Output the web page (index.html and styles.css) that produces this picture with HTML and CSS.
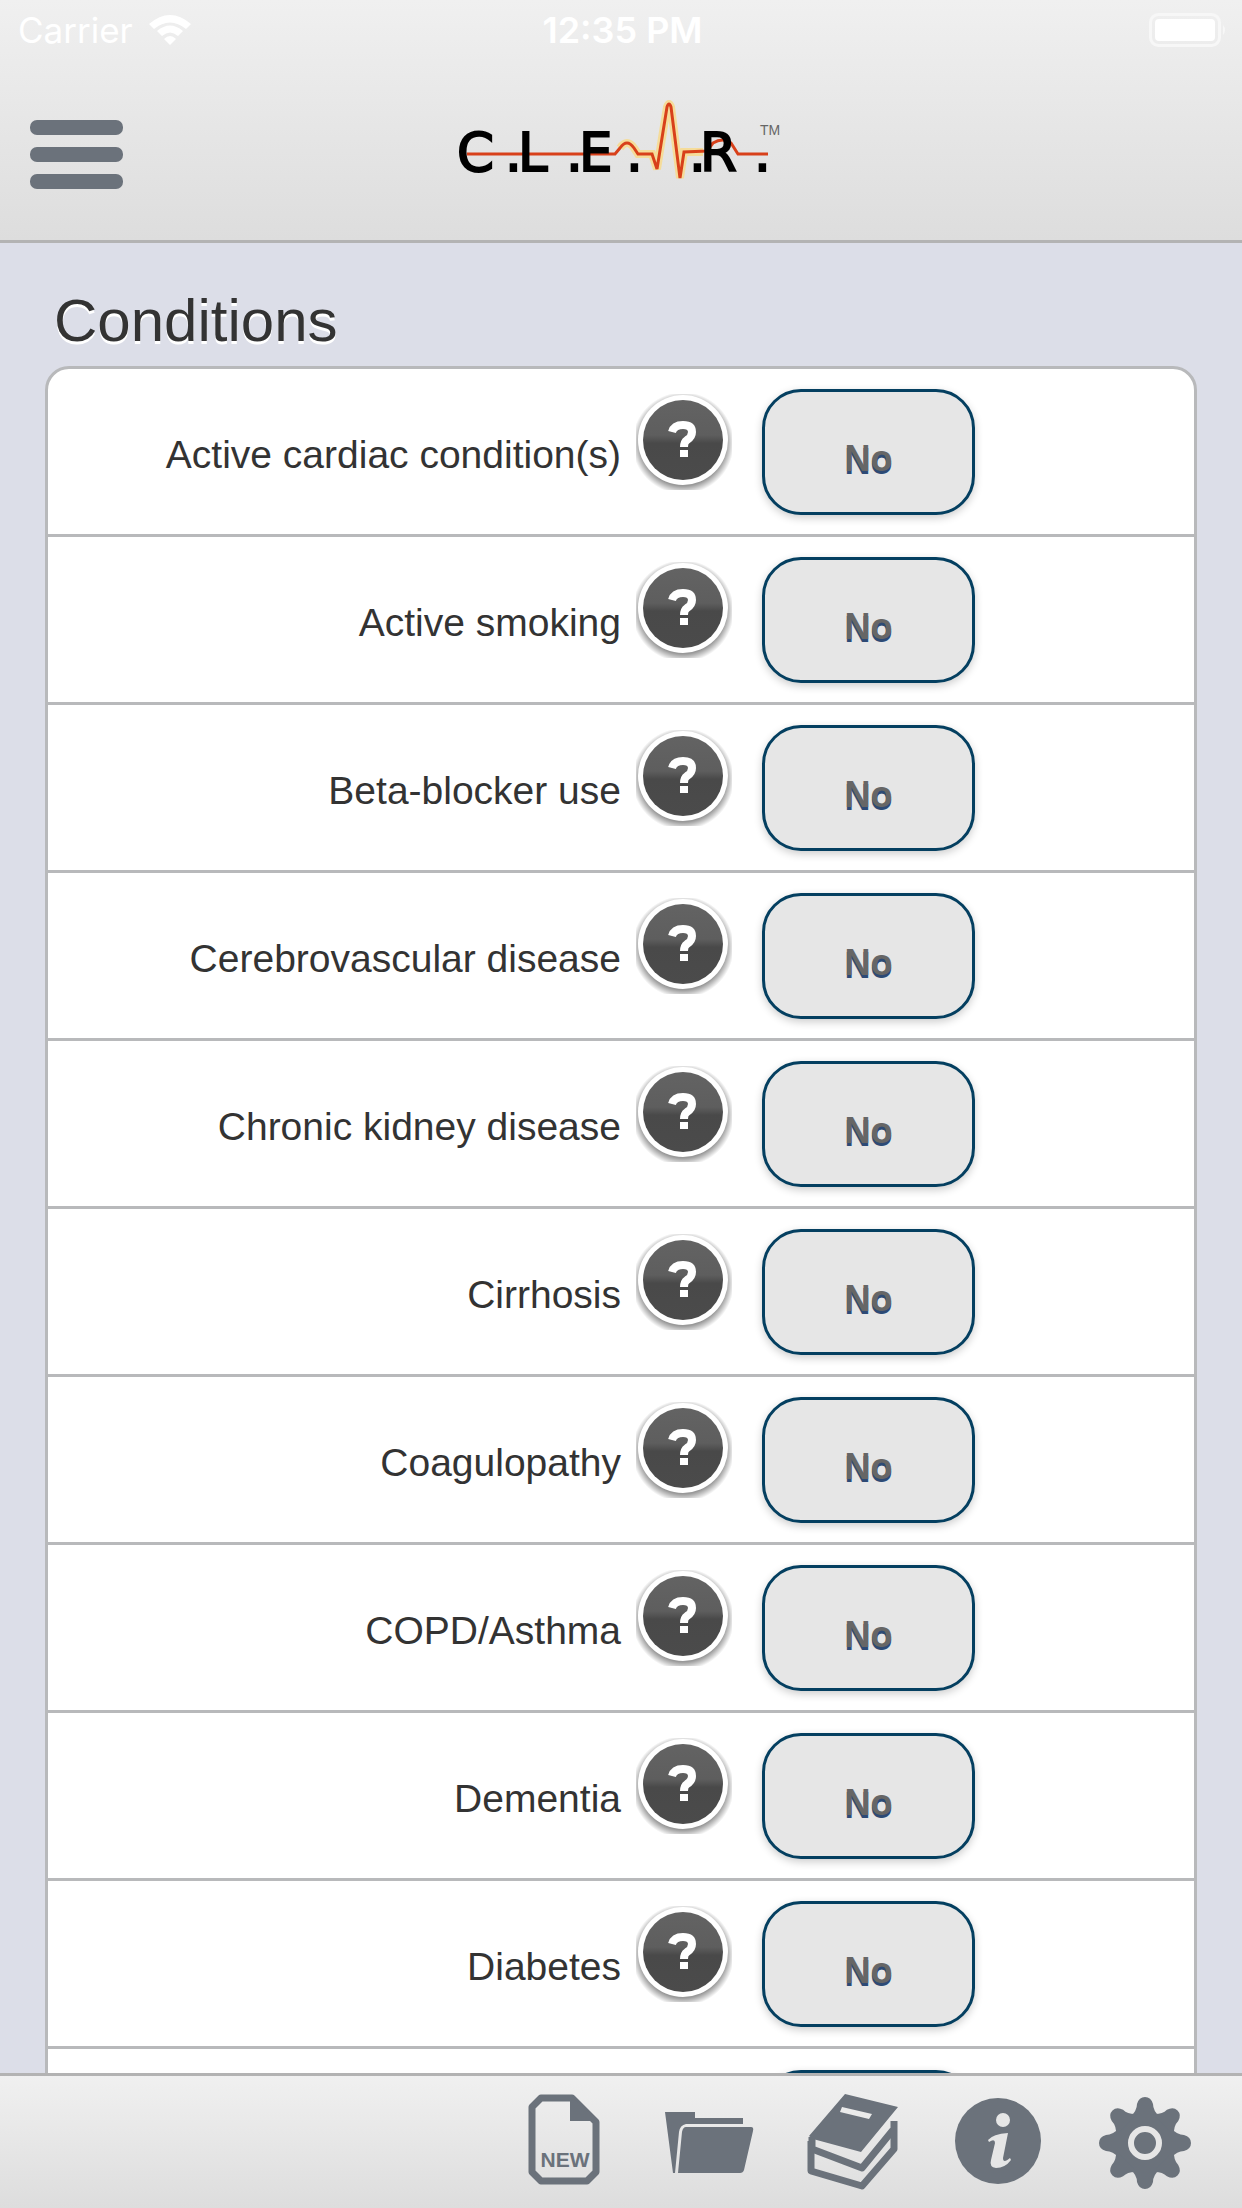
FILE: index.html
```html
<!DOCTYPE html>
<html lang="en">
<head>
    <meta charset="UTF-8">
    <meta name="viewport" content="width=device-width, initial-scale=1.0">
    <title>C.L.E.A.R. - Conditions</title>
    <link rel="stylesheet" href="styles.css">
</head>
<body>
    <!-- Shared shapes: the help icon of every row and one gear tooth -->
    <svg class="sprite" aria-hidden="true">
        <defs>
            <linearGradient id="help-fill" x1="0" y1="0" x2="0" y2="1">
                <stop offset="0" stop-color="#636363"/>
                <stop offset="0.44" stop-color="#5e5e5e"/>
                <stop offset="0.54" stop-color="#494949"/>
                <stop offset="1" stop-color="#4b4b4b"/>
            </linearGradient>
            <radialGradient id="help-shadow">
                <stop offset="0.84" stop-color="#000" stop-opacity="0.4"/>
                <stop offset="1" stop-color="#000" stop-opacity="0"/>
            </radialGradient>
            <path id="tooth" d="M-15 -26 Q-8 -32 -8 -39 Q-6 -46 0 -46 Q6 -46 8 -39 Q8 -32 15 -26 Z"/>
        </defs>
        <symbol id="help" viewBox="0 0 96 96">
            <circle cx="47" cy="49" r="51" fill="url(#help-shadow)"/>
            <circle cx="47" cy="46" r="45" fill="#fff"/>
            <circle cx="47" cy="46" r="40" fill="url(#help-fill)"/>
            <path d="M36 38 Q38 31 47 31 Q56 31 56 38 Q56 43 51 46 Q48 48 48 53" fill="none" stroke="#fff" stroke-width="8"/>
            <rect x="44" y="56" width="8" height="7" fill="#fff"/>
        </symbol>
    </svg>

    <header class="header">
        <div class="status-bar">
            <div class="carrier">
                <span>Carrier</span>
                <svg class="wifi" viewBox="0 0 42 30" aria-hidden="true">
                    <path d="M0 9 Q21 -9 42 9 L37 14 Q21 1 5 14 Z"/>
                    <path d="M8 16 Q21 5 34 16 L29 21 Q21 14 13 21 Z"/>
                    <path d="M15 24 Q21 18 27 24 L21 30 Z"/>
                </svg>
            </div>
            <span class="time">12:35 PM</span>
            <svg class="battery" viewBox="0 0 78 34" aria-hidden="true">
                <rect x="1.5" y="1.5" width="69" height="31" rx="8" fill="none" stroke="#f7f7f7" stroke-width="3"/>
                <rect x="6" y="6" width="60" height="22" rx="4" fill="#fff"/>
                <path d="M74 12 Q78 17 74 22 Z" fill="#f7f7f7"/>
            </svg>
        </div>
        <div class="title-bar">
            <button class="menu-button" type="button" aria-label="Menu">
                <span></span>
                <span></span>
                <span></span>
            </button>
            <svg class="logo" viewBox="0 0 340 96" role="img" aria-label="C.L.E.A.R.">
                <path class="pulse-glow" d="M169 58 Q176 48 183 58 L187 64 H201 L206 79 L216 17 Q218 11 220 17 L229 88 L233 62 H252"/>
                <path class="pulse" d="M16 64 H164 L169 58 Q176 48 183 58 L187 64 H201 L206 79 L216 17 Q218 11 220 17 L229 88 L233 62 L256 61 L262 53 Q272 47 280 53 L287 64 H317"/>
                <text class="logo-text" x="6 54 67 115 128 175 238 249 303" y="81">C.L.E..R.</text>
                <text class="logo-tm" x="309" y="45">TM</text>
            </svg>
        </div>
    </header>

    <main class="content">
        <h1>Conditions</h1>
        <div class="list" id="conditions"></div>
    </main>

    <footer class="toolbar">
        <button type="button" aria-label="New">
            <svg viewBox="0 0 96 96">
                <path class="outline" d="M23 7 H54 L78 31 V81 L69 90 H23 L14 81 V16 Z"/>
                <path d="M52 4 L81 30 H52 Z"/>
                <text class="new-text" x="47" y="76" text-anchor="middle">NEW</text>
            </svg>
        </button>
        <button type="button" aria-label="Open">
            <svg viewBox="0 0 96 96">
                <path d="M2 21 H32 V27 H80 V33 H23 Q17 34 16 41 L12 82 H10 Z"/>
                <path d="M23 36 H88 Q91 36 90 40 L81 79 Q80 82 77 82 H15 L19 41 Q20 36 23 36 Z"/>
            </svg>
        </button>
        <button type="button" aria-label="Library">
            <svg viewBox="0 0 96 96">
                <path fill-rule="evenodd" d="M37 3 L90 16 L53 61 L5 48 L1 45 Z M34 16 L64 23 L61 28 L32 21 Z"/>
                <path class="outline" d="M4 46 V58 L54 77 L85 39"/>
                <path class="outline" d="M3 50 V80 L54 95 L86 58 V30"/>
            </svg>
        </button>
        <button type="button" aria-label="Information">
            <svg viewBox="0 0 96 96">
                <circle cx="45" cy="50" r="43"/>
                <circle cx="50" cy="29" r="7" fill="#e6e6e6"/>
                <path d="M35 49 Q40 43 55 42 L50 67 Q50 73 57 67 L58 69 Q52 77 43 77 Q36 76 38 69 L42 52 Q42 47 36 51 Z" fill="#e6e6e6"/>
            </svg>
        </button>
        <button type="button" aria-label="Settings">
            <svg viewBox="0 0 96 96">
                <g transform="translate(47 52)">
                    <circle r="30"/>
                    <use href="#tooth"/>
                    <use href="#tooth" transform="rotate(45)"/>
                    <use href="#tooth" transform="rotate(90)"/>
                    <use href="#tooth" transform="rotate(135)"/>
                    <use href="#tooth" transform="rotate(180)"/>
                    <use href="#tooth" transform="rotate(225)"/>
                    <use href="#tooth" transform="rotate(270)"/>
                    <use href="#tooth" transform="rotate(315)"/>
                    <circle r="14" fill="none" stroke="#e6e6e6" stroke-width="6"/>
                </g>
            </svg>
        </button>
    </footer>

    <script>
        const conditions = [
            'Active cardiac condition(s)',
            'Active smoking',
            'Beta-blocker use',
            'Cerebrovascular disease',
            'Chronic kidney disease',
            'Cirrhosis',
            'Coagulopathy',
            'COPD/Asthma',
            'Dementia',
            'Diabetes',
            ''
        ];
        const list = document.getElementById('conditions');

        conditions.forEach(function(name, i) {
            list.innerHTML += `
                <div class="row">
                    <label for="condition_${i}">${name}</label>
                    <div class="controls">
                        <button class="help-button" type="button" aria-label="Help">
                            <svg viewBox="0 0 96 96"><use href="#help"/></svg>
                        </button>
                        <button class="answer" id="condition_${i}" type="button">${name ? 'No' : ''}</button>
                    </div>
                </div>
            `;
        });

        // Toggle the answer between No and Yes
        list.addEventListener('click', function(event) {
            if (event.target.classList.contains('answer')) {
                event.target.textContent = event.target.textContent === 'No' ? 'Yes' : 'No';
            }
        });
    </script>
</body>
</html>
```
FILE: styles.css
```css
* {
    box-sizing: border-box;
}
body {
    margin: 0;
    height: 100vh;
    display: flex;
    flex-direction: column;
    font-family: "Liberation Sans", Arial, sans-serif;
    background: #dcdee8;
    color: #333;
}
button {
    padding: 0;
    border: none;
    background: none;
    font-family: inherit;
    cursor: pointer;
}
svg {
    display: block;
}
.sprite {
    position: absolute;
    width: 0;
    height: 0;
}

/* Header */
.header {
    flex: none;
    background: linear-gradient(#f0f0f0, #dddddd);
    border-bottom: 3px solid #b3b3b3;
}
.status-bar {
    display: grid;
    grid-template-columns: 1fr auto 1fr;
    align-items: center;
    height: 60px;
    padding: 0 15px 0 18px;
    font-family: Inter, sans-serif;
    font-size: 35px;
    color: #fff;
}
.carrier {
    display: flex;
    align-items: center;
    gap: 16px;
}
.wifi {
    width: 42px;
    height: 30px;
    fill: #fff;
}
.time {
    font-size: 36px;
    font-weight: 600;
}
.battery {
    width: 78px;
    height: 34px;
    justify-self: end;
}
.title-bar {
    display: grid;
    grid-template-columns: 1fr auto 1fr;
    height: 180px;
    padding: 30px;
}
.menu-button {
    display: flex;
    flex-direction: column;
    gap: 12px;
    width: 93px;
    padding-top: 30px;
}
.menu-button span {
    width: 93px;
    height: 15px;
    border-radius: 7px;
    background: #6b727b;
}
.logo {
    width: 340px;
    height: 96px;
}
.logo-text {
    font-family: "DejaVu Sans", sans-serif;
    font-size: 53px;
    stroke: #000;
    stroke-width: 2;
}
.logo-tm {
    font-size: 14px;
    fill: #666;
}
.pulse {
    fill: none;
    stroke: #d8401a;
    stroke-width: 3;
}
.pulse-glow {
    fill: none;
    stroke: #f5dc9a;
    stroke-width: 8;
}

/* Conditions */
.content {
    flex: 1;
    min-height: 0;
    overflow-y: auto;
    scrollbar-width: none;
    padding: 39px 45px 0;
}
h1 {
    margin: 0;
    padding: 0 9px 6px;
    font-size: 60px;
    font-weight: normal;
    line-height: 78px;
    text-shadow: 0 3px 0 #fff;
}
.list {
    border: 3px solid #b8b9bb;
    border-radius: 24px;
    background: #fff;
}
.row {
    display: grid;
    grid-template-columns: 1fr 1fr;
    align-items: center;
    height: 168px;
    border-bottom: 3px solid #b8b9bb;
}
.row:last-child {
    border-bottom: none;
}
.row label {
    padding-top: 6px;
    font-size: 39px;
    text-align: right;
}
.controls {
    display: flex;
    gap: 30px;
    padding-left: 15px;
}
.help-button,
.help-button svg {
    width: 96px;
    height: 96px;
}
.help-button {
    margin-top: 5px;
}
.answer {
    width: 213px;
    height: 126px;
    padding-top: 14px;
    border: 3px solid #043f60;
    border-radius: 39px;
    background: #e6e6e6;
    box-shadow: 0 3px 9px rgba(0, 0, 0, 0.2);
    color: #666;
    font-size: 36px;
    font-weight: bold;
    text-shadow: 0 3px 0 #2d4a75;
}

/* Bottom toolbar */
.toolbar {
    flex: none;
    display: flex;
    justify-content: flex-end;
    gap: 49px;
    height: 135px;
    padding: 15px 48px 0;
    border-top: 3px solid #b3b3b3;
    background: linear-gradient(#f0f0f0, #dddddd);
}
.toolbar button,
.toolbar svg {
    width: 96px;
    height: 96px;
}
.toolbar svg {
    overflow: visible;
    fill: #6b727b;
}
.toolbar .outline {
    fill: none;
    stroke: #6b727b;
    stroke-width: 7;
    stroke-linejoin: round;
}
.new-text {
    font-size: 21px;
    font-weight: bold;
}
```
